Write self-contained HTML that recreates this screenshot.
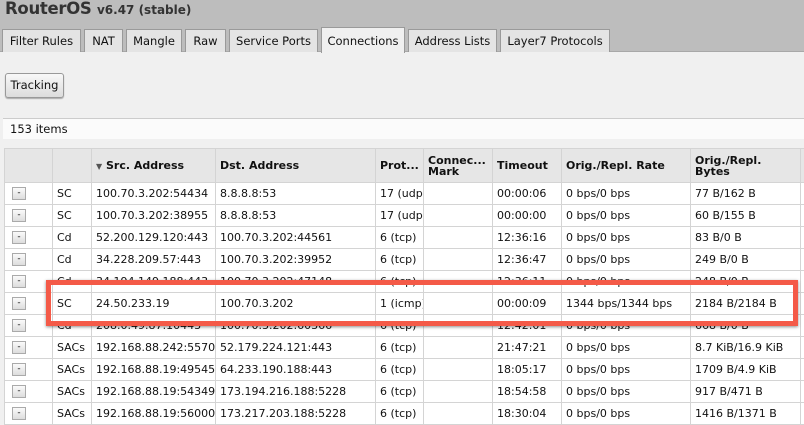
<!DOCTYPE html>
<html><head><style>
*{box-sizing:border-box;margin:0;padding:0}
body{width:804px;height:411px;overflow:hidden;background:#f0f0f0;font-family:"DejaVu Sans","Liberation Sans",sans-serif;font-size:11px;color:#111;position:relative}
.top{position:absolute;left:0;top:0;width:804px;height:52px;background:#bdbdbd;border-bottom:1px solid #a8a8a8}
.title{position:absolute;left:5px;top:-1px;font-weight:bold;font-size:16.5px;color:#333;letter-spacing:-0.3px}
.title small{font-size:12px;letter-spacing:0}
.tab{position:absolute;top:29px;height:23px;background:#e4e4e4;border:1px solid #9a9a9a;border-bottom:none;line-height:22px;text-align:center;font-size:11.5px;white-space:nowrap}
.tab.act{background:#f0f0f0;top:27px;height:26px;line-height:27px}
.btn{position:absolute;left:5px;top:73px;width:59px;height:25px;border:1px solid #999;border-radius:3px;background:linear-gradient(#f8f8f8,#dcdcdc);line-height:23px;text-align:center;font-size:11.5px;box-shadow:0 1px 1px #aaa}
.items{position:absolute;left:3px;top:118px;width:801px;height:21px;background:#fbfbfb;border-top:1px solid #ccc;line-height:21px;padding-left:7px;font-size:11.5px}
table{position:absolute;left:4px;top:148px;width:806px;border-collapse:collapse;table-layout:fixed;background:#fff}
td,th{border:1px solid #d4d4d4;height:22px;padding:0 0 0 4px;white-space:nowrap;overflow:hidden;text-align:left}
th{background:#e6e6e6;height:34px;font-weight:bold;line-height:11px;font-size:11px}
.m{display:inline-block;width:14px;height:13px;border:1px solid #aaa;background:linear-gradient(#fafafa,#ddd);font-size:9px;line-height:10px;text-align:center;margin-left:3px;vertical-align:middle}
.red{position:absolute;left:46px;top:280px;width:752px;height:46px;border:5px solid #f45a48;box-shadow:0 1px 3px rgba(0,0,0,.45)}
</style></head><body>
<div class="top"><div class="title">RouterOS <small>v6.47 (stable)</small></div></div>
<div class="tab" style="left:2px;width:79px">Filter Rules</div>
<div class="tab" style="left:84px;width:39px">NAT</div>
<div class="tab" style="left:126px;width:56px">Mangle</div>
<div class="tab" style="left:185px;width:41px">Raw</div>
<div class="tab" style="left:229px;width:89px">Service Ports</div>
<div class="tab act" style="left:321px;width:84px">Connections</div>
<div class="tab" style="left:408px;width:89px">Address Lists</div>
<div class="tab" style="left:500px;width:110px">Layer7 Protocols</div>
<div class="btn">Tracking</div>
<div class="items">153 items</div>
<table>
<colgroup><col style="width:48px"><col style="width:39px"><col style="width:124px"><col style="width:160px"><col style="width:48px"><col style="width:69px"><col style="width:69px"><col style="width:129px"><col style="width:110px"><col style="width:10px"></colgroup>
<tr><th></th><th></th><th><span style="font-size:8px;color:#555">▼</span> Src. Address</th><th>Dst. Address</th><th>Prot...</th><th>Connec...<br>Mark</th><th>Timeout</th><th>Orig./Repl. Rate</th><th>Orig./Repl.<br>Bytes</th><th></th></tr>
<tr><td><span class="m">-</span></td><td>SC</td><td>100.70.3.202:54434</td><td>8.8.8.8:53</td><td>17 (udp)</td><td></td><td>00:00:06</td><td>0 bps/0 bps</td><td>77 B/162 B</td><td></td></tr>
<tr><td><span class="m">-</span></td><td>SC</td><td>100.70.3.202:38955</td><td>8.8.8.8:53</td><td>17 (udp)</td><td></td><td>00:00:00</td><td>0 bps/0 bps</td><td>60 B/155 B</td><td></td></tr>
<tr><td><span class="m">-</span></td><td>Cd</td><td>52.200.129.120:443</td><td>100.70.3.202:44561</td><td>6 (tcp)</td><td></td><td>12:36:16</td><td>0 bps/0 bps</td><td>83 B/0 B</td><td></td></tr>
<tr><td><span class="m">-</span></td><td>Cd</td><td>34.228.209.57:443</td><td>100.70.3.202:39952</td><td>6 (tcp)</td><td></td><td>12:36:47</td><td>0 bps/0 bps</td><td>249 B/0 B</td><td></td></tr>
<tr><td><span class="m">-</span></td><td>Cd</td><td>34.194.149.188:443</td><td>100.70.3.202:47148</td><td>6 (tcp)</td><td></td><td>12:36:11</td><td>0 bps/0 bps</td><td>248 B/0 B</td><td></td></tr>
<tr><td><span class="m">-</span></td><td>SC</td><td>24.50.233.19</td><td>100.70.3.202</td><td>1 (icmp)</td><td></td><td>00:00:09</td><td>1344 bps/1344 bps</td><td>2184 B/2184 B</td><td></td></tr>
<tr><td><span class="m">-</span></td><td>Cd</td><td>208.0.49.87:10443</td><td>100.70.3.202:60366</td><td>6 (tcp)</td><td></td><td>12:42:01</td><td>0 bps/0 bps</td><td>668 B/0 B</td><td></td></tr>
<tr><td><span class="m">-</span></td><td>SACs</td><td>192.168.88.242:55700</td><td>52.179.224.121:443</td><td>6 (tcp)</td><td></td><td>21:47:21</td><td>0 bps/0 bps</td><td>8.7 KiB/16.9 KiB</td><td></td></tr>
<tr><td><span class="m">-</span></td><td>SACs</td><td>192.168.88.19:49545</td><td>64.233.190.188:443</td><td>6 (tcp)</td><td></td><td>18:05:17</td><td>0 bps/0 bps</td><td>1709 B/4.9 KiB</td><td></td></tr>
<tr><td><span class="m">-</span></td><td>SACs</td><td>192.168.88.19:54349</td><td>173.194.216.188:5228</td><td>6 (tcp)</td><td></td><td>18:54:58</td><td>0 bps/0 bps</td><td>917 B/471 B</td><td></td></tr>
<tr><td><span class="m">-</span></td><td>SACs</td><td>192.168.88.19:56000</td><td>173.217.203.188:5228</td><td>6 (tcp)</td><td></td><td>18:30:04</td><td>0 bps/0 bps</td><td>1416 B/1371 B</td><td></td></tr>
</table>
<div class="red"></div>
</body></html>
